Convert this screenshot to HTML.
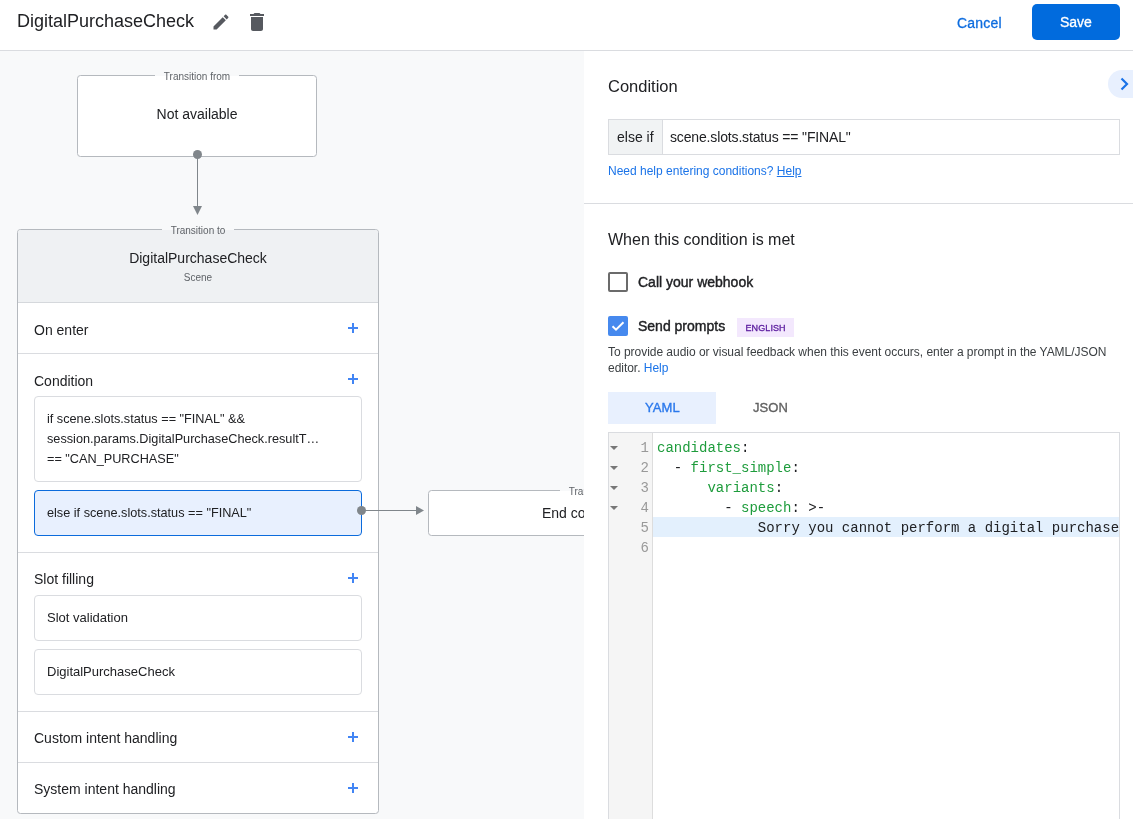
<!DOCTYPE html>
<html><head><meta charset="utf-8">
<style>
*{box-sizing:border-box;margin:0;padding:0}
html,body{width:1133px;height:819px;overflow:hidden;background:#fff;font-family:"Liberation Sans",sans-serif;color:#202124}
.abs{position:absolute}
#hdr{position:absolute;left:0;top:0;width:1133px;height:51px;background:#fff;border-bottom:1px solid #dadce0}
#canvas{position:absolute;left:0;top:51px;width:584px;height:768px;background:#f8f9fa;overflow:hidden}
#panel{position:absolute;left:584px;top:51px;width:549px;height:768px;background:#fff;overflow:hidden}
.t{position:absolute;white-space:pre;line-height:1}
.box{position:absolute;background:#fff;border:1px solid #b5b9be;border-radius:3.5px}
.gut{position:absolute;left:609px;width:40px;height:20px;line-height:20px;text-align:right;font-family:"Liberation Mono",monospace;font-size:14px;color:#999}
.fold{position:absolute;left:1px;top:7.5px;width:0;height:0;border-left:4px solid transparent;border-right:4px solid transparent;border-top:4.5px solid #777}
.code{position:absolute;left:657px;width:462px;overflow:hidden;white-space:pre;font-family:"Liberation Mono",monospace;font-size:14px;line-height:20px;color:#202124}
.k{color:#1e9c3c}
.lblw{position:absolute;display:flex;justify-content:center;height:12px}
.sep{left:0;width:360px;height:1px;background:#dadce0}
.sh{left:34px;font-size:14px;line-height:16px;color:#202124}
.plus{position:absolute;left:348px;width:10px;height:10px;margin-top:1px;background:linear-gradient(#4285f4,#4285f4) center/10px 2px no-repeat,linear-gradient(#4285f4,#4285f4) center/2px 10px no-repeat}
.ibox{position:absolute;left:34px;width:328px;background:#fff;border:1px solid #dadce0;border-radius:4px}
.it{left:47px;font-size:12.7px;color:#202124;line-height:16px}
.lbl{display:inline-block;font-size:10px;color:#5f6368;background:linear-gradient(transparent 6px,#f8f9fa 6px,#f8f9fa 7px,transparent 7px);padding:0 9px;line-height:15px;white-space:pre}
</style></head><body><div style="position:absolute;left:0;top:0;width:1133px;height:819px;will-change:transform">
<div id="hdr">
  <div class="t" style="left:17px;top:12px;font-size:18px;color:#202124">DigitalPurchaseCheck</div>
  <svg class="abs" style="left:211px;top:12px" width="20" height="20" viewBox="0 0 24 24"><path fill="#56595f" d="M3 17.25V21h3.75L17.81 9.94l-3.75-3.75L3 17.25zM20.71 7.04c.39-.39.39-1.02 0-1.41l-2.34-2.34c-.39-.39-1.02-.39-1.41 0l-1.83 1.83 3.75 3.75 1.83-1.83z"/></svg>
  <svg class="abs" style="left:245px;top:10px" width="24" height="24" viewBox="0 0 24 24"><path fill="#56595f" d="M6 19c0 1.1.9 2 2 2h8c1.1 0 2-.9 2-2V7H6v12zM19 4h-3.5l-1-1h-5l-1 1H5v2h14V4z"/></svg>
  <div class="t" style="left:957px;top:16px;font-size:14px;color:#0e6ddf;letter-spacing:0.2px;-webkit-text-stroke:0.3px #0e6ddf">Cancel</div>
  <div class="abs" style="left:1032px;top:4px;width:88px;height:36px;background:#016bdd;border-radius:5px"></div>
  <div class="t" style="left:1060px;top:15px;font-size:14px;color:#fff;-webkit-text-stroke:0.3px #fff">Save</div>
</div>

<div id="canvas">
  <!-- transition from -->
  <div class="box" style="left:77px;top:24px;width:240px;height:82px"></div>
  <div class="lblw" style="left:77px;width:240px;top:18px"><span class="lbl">Transition from</span></div>
  <div class="t" style="left:77px;width:240px;text-align:center;top:56px;font-size:14px">Not available</div>
  <div class="abs" style="left:193px;top:99px;width:9px;height:9px;border-radius:50%;background:#80868b"></div>
  <div class="abs" style="left:197px;top:104px;width:1px;height:52px;background:#80868b"></div>
  <svg class="abs" style="left:193px;top:155px" width="9" height="9"><path d="M0 0H9L4.5 9Z" fill="#80868b"/></svg>
  <!-- scene card -->
  <div class="box" style="left:17px;top:178px;width:362px;height:585px;overflow:hidden">
    <div class="abs" style="left:0;top:0;width:360px;height:73px;background:#eff1f3;border-bottom:1px solid #d5d8dc"></div>
    <div class="abs sep" style="top:123px"></div>
    <div class="abs sep" style="top:322px"></div>
    <div class="abs sep" style="top:481px"></div>
    <div class="abs sep" style="top:532px"></div>
  </div>
  <div class="lblw" style="left:17px;width:362px;top:172px"><span class="lbl">Transition to</span></div>
  <div class="t" style="left:17px;width:362px;text-align:center;top:200px;font-size:14px">DigitalPurchaseCheck</div>
  <div class="t" style="left:17px;width:362px;text-align:center;top:222px;font-size:10px;color:#5f6368">Scene</div>

  <div class="t sh" style="top:271px">On enter</div><div class="plus" style="top:271px"></div>
  <div class="t sh" style="top:322px">Condition</div><div class="plus" style="top:322px"></div>
  <div class="ibox" style="top:345px;height:86px"></div>
  <div class="t it" style="top:358px;line-height:20px">if scene.slots.status == "FINAL" &amp;&amp;
session.params.DigitalPurchaseCheck.resultT…
== "CAN_PURCHASE"</div>
  <div class="ibox" style="top:439px;height:46px;background:#e8f0fe;border-color:#0b6bdc"></div>
  <div class="t it" style="top:452px;line-height:20px">else if scene.slots.status == "FINAL"</div>

  <div class="t sh" style="top:520px">Slot filling</div><div class="plus" style="top:521px"></div>
  <div class="ibox" style="top:544px;height:46px"></div>
  <div class="t it" style="top:559px;font-size:13px">Slot validation</div>
  <div class="ibox" style="top:598px;height:46px"></div>
  <div class="t it" style="top:613px;font-size:13px">DigitalPurchaseCheck</div>

  <div class="t sh" style="top:679px">Custom intent handling</div><div class="plus" style="top:680px"></div>
  <div class="t sh" style="top:730px">System intent handling</div><div class="plus" style="top:731px"></div>

  <!-- connector to end -->
  <div class="abs" style="left:357px;top:455px;width:9px;height:9px;border-radius:50%;background:#80868b"></div>
  <div class="abs" style="left:362px;top:459px;width:58px;height:1px;background:#80868b"></div>
  <svg class="abs" style="left:416px;top:455px" width="8" height="9"><path d="M0 0V9L8 4.5Z" fill="#80868b"/></svg>
  <div class="box" style="left:428px;top:439px;width:336px;height:46px"></div>
  <div class="lblw" style="left:428px;width:336px;top:433px"><span class="lbl">Transition to</span></div>
  <div class="t" style="left:428px;width:336px;text-align:center;top:455px;font-size:14px">End conversation</div>
</div>

<div id="panel"></div>
<div class="abs" style="left:584px;top:203px;width:549px;height:1px;background:#dadce0"></div>
<div class="t" style="left:608px;top:78px;font-size:16.5px;color:#202124">Condition</div>
<div class="abs" style="left:1108px;top:70px;width:40px;height:28px;border-radius:14px;background:#e8f0fe"></div>
<svg class="abs" style="left:1118px;top:76px" width="14" height="16" viewBox="0 0 14 16"><path d="M3.5 2.5L9 8L3.5 13.5" fill="none" stroke="#1a73e8" stroke-width="2.2"/></svg>

<div class="abs" style="left:608px;top:119px;width:512px;height:36px;border:1px solid #dadce0;background:#fff"></div>
<div class="abs" style="left:609px;top:120px;width:54px;height:34px;background:#f1f3f4;border-right:1px solid #dadce0"></div>
<div class="t" style="left:617px;top:130px;font-size:14px;color:#202124">else if</div>
<div class="t" style="left:670px;top:130px;font-size:14px;color:#202124;letter-spacing:-0.15px">scene.slots.status == "FINAL"</div>
<div class="t" style="left:608px;top:165px;font-size:12px;color:#1a73e8">Need help entering conditions? <u>Help</u></div>

<div class="t" style="left:608px;top:231.5px;font-size:16px;color:#202124">When this condition is met</div>
<div class="abs" style="left:608px;top:272px;width:20px;height:20px;border:2px solid #6b6b6b;border-radius:2px"></div>
<div class="t" style="left:638px;top:275px;font-size:14px;font-weight:400;color:#202124;-webkit-text-stroke:0.4px #202124">Call your webhook</div>
<div class="abs" style="left:608px;top:316px;width:20px;height:20px;background:#4689ee;border-radius:2px"></div>
<svg class="abs" style="left:608px;top:316px" width="20" height="20" viewBox="0 0 20 20"><path d="M4.5 10.2L8 13.6L15.5 6.2" fill="none" stroke="#fff" stroke-width="2"/></svg>
<div class="t" style="left:638px;top:319px;font-size:14px;font-weight:400;color:#202124;-webkit-text-stroke:0.4px #202124">Send prompts</div>
<div class="abs" style="left:737px;top:318px;width:57px;height:19px;background:#f3e8fd"></div>
<div class="t" style="left:745.5px;top:323.5px;font-size:9px;font-weight:400;color:#5a1a9e;letter-spacing:0.1px;-webkit-text-stroke:0.3px #5a1a9e">ENGLISH</div>
<div class="t" style="left:608px;top:343.5px;font-size:12px;line-height:16px;color:#3c4043;width:520px;white-space:normal;letter-spacing:-0.03px">To provide audio or visual feedback when this event occurs, enter a prompt in the YAML/JSON editor. <span style="color:#1a73e8">Help</span></div>

<div class="abs" style="left:608px;top:392px;width:108px;height:32px;background:#e8f0fe"></div>
<div class="t" style="left:645px;top:401px;font-size:13px;font-weight:400;color:#2a78ec;letter-spacing:0.1px;-webkit-text-stroke:0.35px #2a78ec">YAML</div>
<div class="t" style="left:753px;top:401px;font-size:13px;font-weight:400;color:#616161;letter-spacing:0.1px;-webkit-text-stroke:0.35px #616161">JSON</div>

<div class="abs" style="left:608px;top:432px;width:512px;height:400px;border:1px solid #dadce0;background:#fff"></div>
<div class="abs" style="left:609px;top:433px;width:44px;height:400px;background:#f5f5f5;border-right:1px solid #ddd"></div>
<div class="abs" style="left:653px;top:517px;width:466px;height:20px;background:#e3f0fd"></div>
<div class="gut" style="top:438px"><i class="fold"></i>1</div>
<div class="gut" style="top:458px"><i class="fold"></i>2</div>
<div class="gut" style="top:478px"><i class="fold"></i>3</div>
<div class="gut" style="top:498px"><i class="fold"></i>4</div>
<div class="gut" style="top:518px">5</div>
<div class="gut" style="top:538px">6</div>
<div class="code" style="top:438px"><span class="k">candidates</span>:
  - <span class="k">first_simple</span>:
      <span class="k">variants</span>:
        - <span class="k">speech</span>: &gt;-
            Sorry you cannot perform a digital purchase</div>
</div></body></html>
